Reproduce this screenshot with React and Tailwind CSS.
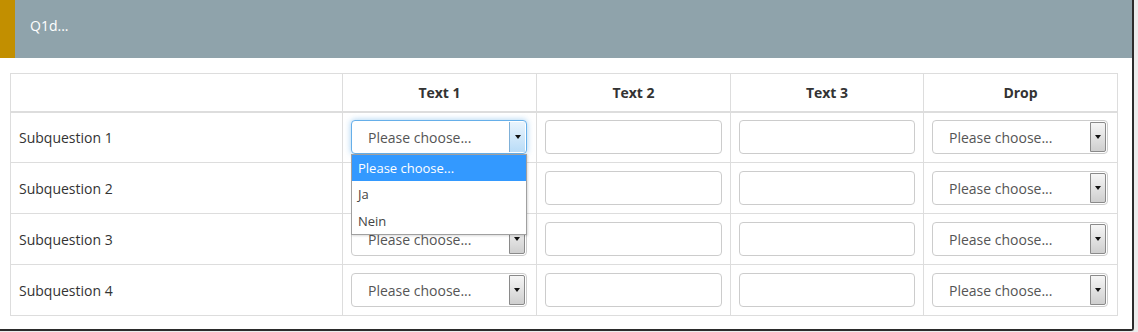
import React from "react";

function Arrow({ active }) {
  return (
    <div
      className={
        "absolute right-[1px] top-[1px] bottom-[1px] w-[16px] border-l flex items-center justify-center " +
        (active
          ? "border-[#7fb0d8] bg-gradient-to-b from-[#e9f4fd] to-[#b9dcf7]"
          : "border-[#8a8a8a] bg-gradient-to-b from-[#f6f6f6] to-[#cfcfcf] border-r border-t border-b rounded-r-[2px]")
      }
    >
      <div className="w-0 h-0 border-l-[3.5px] border-r-[3.5px] border-t-[4px] border-l-transparent border-r-transparent border-t-[#111]" />
    </div>
  );
}

function Select({ active }) {
  return (
    <div
      className={
        "relative h-[34px] rounded-[4px] border bg-white flex items-center pl-[16px] text-[14px] text-[#555] " +
        (active
          ? "border-[#66afe9] shadow-[0_0_6px_rgba(102,175,233,0.6)]"
          : "border-[#cccccc]")
      }
    >
      <span>Please choose...</span>
      <Arrow active={active} />
    </div>
  );
}

function TextInput() {
  return <div className="h-[34px] rounded-[4px] border border-[#cccccc] bg-white" />;
}

export default function App() {
  const rows = ["Subquestion 1", "Subquestion 2", "Subquestion 3", "Subquestion 4"];
  return (
    <div
      className="w-[1138px] h-[332px] bg-[#ececec] overflow-hidden"
      style={{ fontFamily: '"Open Sans", "Liberation Sans", sans-serif' }}
    >
      <div className="w-[1134px] h-[331px] bg-white border-r-2 border-b-2 border-[#2b2b2b] rounded-br-[3px] flex flex-col">
        <div className="h-[58px] bg-[#8fa3ab] flex items-center border-l-[15px] border-[#c28f00] pl-[15px]">
          <span className="text-white text-[14px] -mt-[7px]">Q1d...</span>
        </div>
        <div className="pt-[15px] pl-[10px]">
          <table className="table-fixed border-collapse w-[1107px] text-[14px] text-[#333]">
            <colgroup>
              <col className="w-[332px]" />
              <col className="w-[194px]" />
              <col className="w-[194px]" />
              <col className="w-[193px]" />
              <col className="w-[194px]" />
            </colgroup>
            <thead>
              <tr className="h-[38px]">
                <th className="border border-[#dddddd] border-b-2"></th>
                <th className="border border-[#dddddd] border-b-2 font-bold text-center">Text 1</th>
                <th className="border border-[#dddddd] border-b-2 font-bold text-center">Text 2</th>
                <th className="border border-[#dddddd] border-b-2 font-bold text-center">Text 3</th>
                <th className="border border-[#dddddd] border-b-2 font-bold text-center">Drop</th>
              </tr>
            </thead>
            <tbody>
              {rows.map((r, i) => (
                <tr key={r} className="h-[51px]">
                  <td className="border border-[#dddddd] px-[8px]">{r}</td>
                  <td className="border border-[#dddddd] pl-[8px] pr-[9px]">
                    <div className="relative">
                      <Select active={i === 0} />
                      {i === 0 && (
                        <div className="absolute left-0 right-0 top-[34px] z-10 bg-white border border-[#a0a0a0] text-[13px] text-[#444] shadow-[1px_1px_2px_rgba(0,0,0,0.15)]">
                          <div className="h-[26px] flex items-center pl-[6px] bg-[#3399ff] text-white">Please choose...</div>
                          <div className="h-[27px] flex items-center pl-[6px]">Ja</div>
                          <div className="h-[26px] flex items-center pl-[6px]">Nein</div>
                        </div>
                      )}
                    </div>
                  </td>
                  <td className="border border-[#dddddd] pl-[8px] pr-[8px]">
                    <TextInput />
                  </td>
                  <td className="border border-[#dddddd] pl-[8px] pr-[8px]">
                    <TextInput />
                  </td>
                  <td className="border border-[#dddddd] pl-[8px] pr-[9px]">
                    <Select />
                  </td>
                </tr>
              ))}
            </tbody>
          </table>
        </div>
      </div>
    </div>
  );
}
